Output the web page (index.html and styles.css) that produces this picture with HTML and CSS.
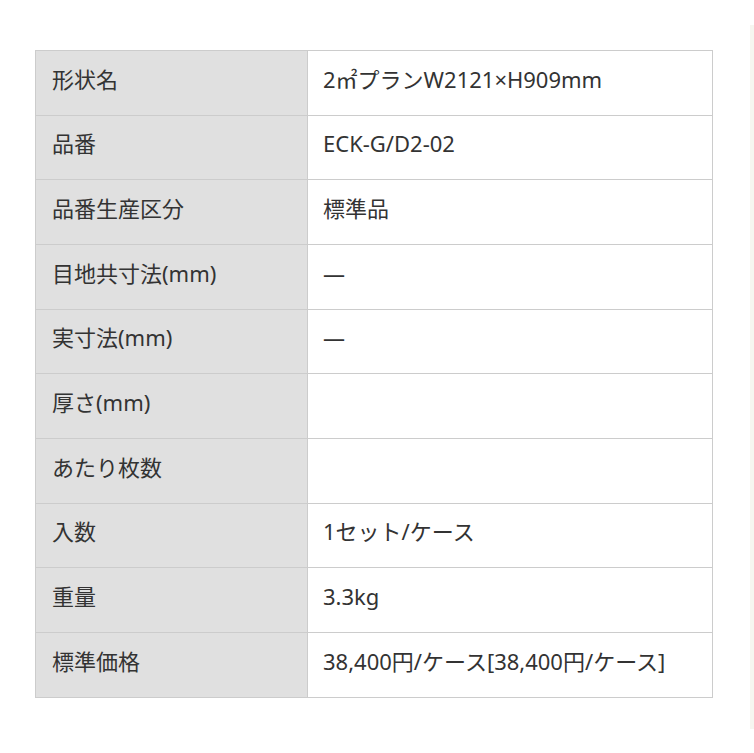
FILE: index.html
```html
<!DOCTYPE html>
<html lang="ja">
<head>
<meta charset="utf-8">
<link rel="stylesheet" href="styles.css">
</head>
<body>
<div class="page">
  <main class="content">
    <table class="spec">
      <tbody>
        <tr><th>形状名</th><td>2㎡プランW2121×H909mm</td></tr>
        <tr><th>品番</th><td>ECK-G/D2-02</td></tr>
        <tr><th>品番生産区分</th><td>標準品</td></tr>
        <tr><th>目地共寸法(mm)</th><td>—</td></tr>
        <tr><th>実寸法(mm)</th><td>—</td></tr>
        <tr><th>厚さ(mm)</th><td></td></tr>
        <tr><th>あたり枚数</th><td></td></tr>
        <tr><th>入数</th><td>1セット/ケース</td></tr>
        <tr><th>重量</th><td>3.3kg</td></tr>
        <tr><th>標準価格</th><td>38,400円/ケース[38,400円/ケース]</td></tr>
      </tbody>
    </table>
  </main>
  <div class="edge"></div>
</div>
</body>
</html>
```

FILE: styles.css
```css
html, body {
  margin: 0;
  padding: 0;
  background: #ffffff;
}
body {
  font-family: "Noto Sans", "Noto Sans CJK JP", sans-serif;
  color: #333333;
}
.page {
  display: flex;
  width: 754px;
  height: 753px;
}
.content {
  flex: 1;
  padding: 50px 0 0 35px;
}
.edge {
  width: 4px;
  margin: 25px 0 24px;
  background: #f6f6f0;
}
.spec {
  border-collapse: collapse;
  width: 678px;
  table-layout: fixed;
}
.spec tr {
  height: 64.67px;
}
.spec th,
.spec td {
  border: 1px solid #cccccc;
  font-size: 22px;
  font-weight: 400;
  line-height: 30px;
  padding: 0 0 8px 15px;
  text-align: left;
  vertical-align: middle;
  white-space: nowrap;
}
.spec th {
  width: 255px;
  padding-left: 16px;
  background: #e0e0e0;
}
.spec td {
  background: #ffffff;
}
```
